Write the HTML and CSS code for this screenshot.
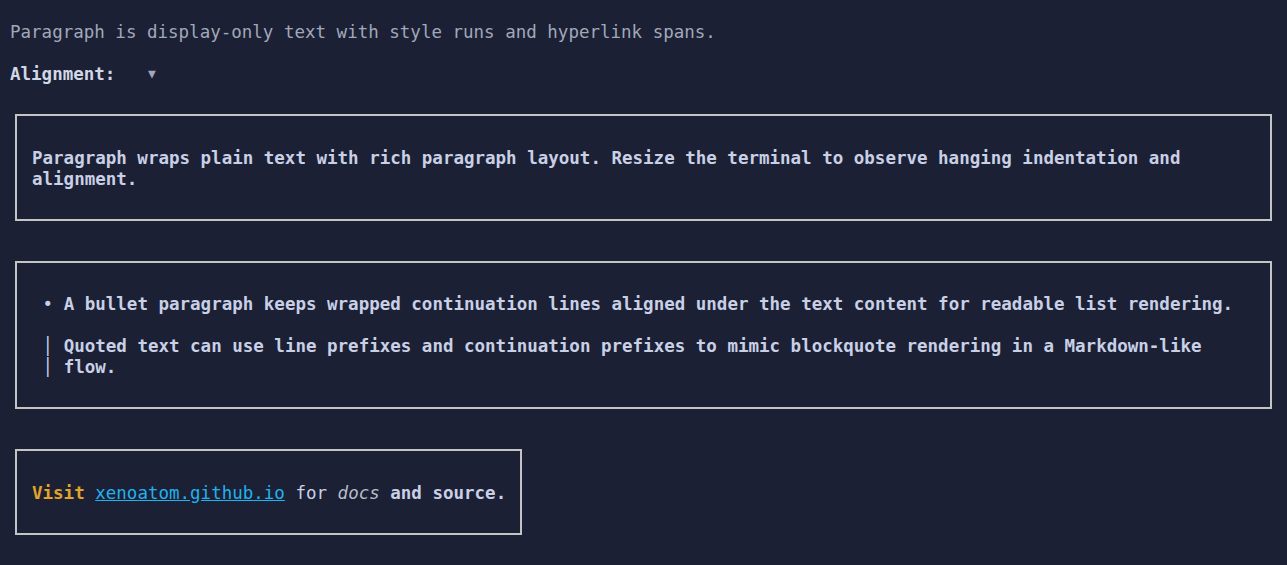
FILE: index.html
```html
<!DOCTYPE html>
<html>
<head>
<meta charset="utf-8">
<link rel="stylesheet" href="styles.css">
</head>
<body>
<main class="app">
  <p class="intro">Paragraph is display-only text with style runs and hyperlink spans.</p>
  <div class="align-row"><span class="label">Alignment:</span><span class="caret">▼</span></div>

  <section class="box box-wide first">
    <p class="line">Paragraph wraps plain text with rich paragraph layout. Resize the terminal to observe hanging indentation and
alignment.</p>
  </section>

  <section class="box box-wide">
    <p class="line"> <span class="prefix">•</span> A bullet paragraph keeps wrapped continuation lines aligned under the text content for readable list rendering.</p>
    <p class="line spaced"> <span class="prefix bar">│</span> Quoted text can use line prefixes and continuation prefixes to mimic blockquote rendering in a Markdown-like
 <span class="prefix bar">│</span> flow.</p>
  </section>

  <section class="box box-small">
    <p class="line"><span class="visit">Visit</span> <a class="link" href="#">xenoatom.github.io</a> <span class="plain">for</span> <em class="docs">docs</em> and source.</p>
  </section>
</main>
</body>
</html>
```

FILE: styles.css
```css
html, body {
  margin: 0;
  padding: 0;
  background: #1b2034;
}

body {
  font-family: "DejaVu Sans Mono", "Liberation Mono", monospace;
  font-size: 17.5px;
  line-height: 20.8px;
  color: #c9d0e6;
}

.app {
  padding: 22px 0 0 10px;
}

p {
  margin: 0;
}

.intro {
  color: #a2a8ba;
}

.align-row {
  margin-top: 20.8px;
  display: flex;
  align-items: center;
}

.label {
  font-weight: bold;
  color: #d2d7e6;
  width: 138px;
}

.caret {
  color: #a2a8ba;
  font-size: 13px;
}

.box {
  border: 2px solid #c4c4c4;
  padding: 31.5px 0 29.5px 15px;
  margin-left: 5px;
  margin-top: 40px;
}

.box.first {
  margin-top: 30px;
}

.box-wide {
  width: 1238px;
}

.box-small {
  width: 488px;
}

.line {
  white-space: pre;
  font-weight: 600;
}

.spaced {
  margin-top: 20.8px;
}

.prefix {
  font-weight: normal;
  color: #c9d0e6;
}

.bar {
  display: inline-block;
  height: 20px;
  line-height: 20px;
  overflow: hidden;
  vertical-align: -4px;
}

.visit {
  color: #e2a52a;
  font-weight: bold;
}

.link {
  color: #1fb2ee;
  font-weight: normal;
  text-decoration: underline;
}

.plain {
  font-weight: normal;
}

.docs {
  color: #b9bdc9;
  font-weight: normal;
}
```
